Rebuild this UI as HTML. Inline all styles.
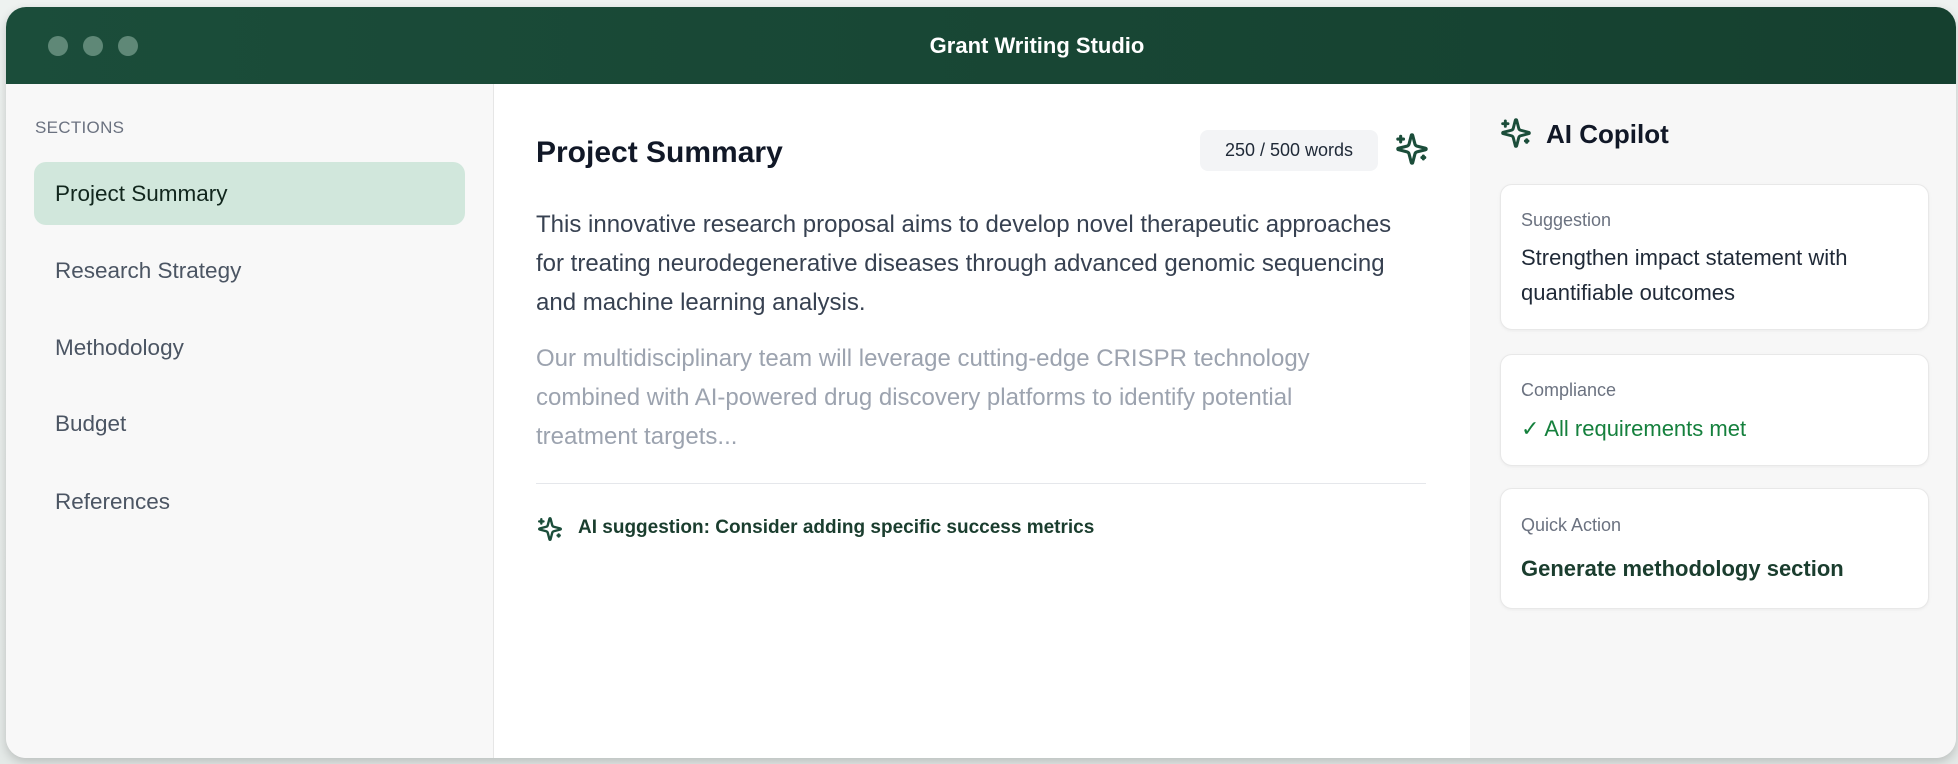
<!DOCTYPE html>
<html><head><meta charset="utf-8"><style>
*{box-sizing:border-box;margin:0;padding:0}
body{width:1958px;height:764px;background:linear-gradient(180deg,#eef2f0,#e4e9e7);font-family:"Liberation Sans",sans-serif;position:relative;overflow:hidden}
.win{position:absolute;left:6px;top:7px;width:1950px;height:751px;border-radius:20px;overflow:hidden;background:#fff;box-shadow:0 4px 10px rgba(0,0,0,.18)}
.hdr{position:absolute;left:0;top:0;width:100%;height:77px;background:linear-gradient(90deg,#1b4d3a,#15402f)}
.dot{position:absolute;top:29px;width:20px;height:20px;border-radius:50%;background:#5f8877}
.title{position:absolute;left:0;width:100%;top:26px;text-align:center;color:#fff;font-weight:bold;font-size:22px;padding-left:112px}
.side{position:absolute;left:0;top:77px;width:488px;bottom:0;background:#f8f8f8;border-right:1px solid #e6e6e6}
.lbl{position:absolute;left:29px;top:34px;font-size:17px;color:#6b7280;letter-spacing:.3px}
.item{position:absolute;left:28px;width:431px;height:63px;line-height:63px;padding-left:21px;font-size:22.5px;color:#4b5563;border-radius:12px}
.item.act{background:#d1e7dc;color:#11261d}
.main{position:absolute;left:489px;top:77px;width:975px;bottom:0}
.h1{position:absolute;left:41px;top:52px;font-size:30px;font-weight:bold;color:#111827}
.badge{position:absolute;left:705px;top:46px;width:178px;height:41px;border-radius:8px;background:#f3f4f6;font-size:18px;color:#1f2937;text-align:center;line-height:41px}
.p{position:absolute;left:41px;width:900px;font-size:24px;line-height:39px;white-space:nowrap}
.div{position:absolute;left:41px;top:399px;width:890px;height:1px;background:#e5e7eb}
.sug{position:absolute;left:83px;top:433px;font-size:19px;font-weight:bold;color:#1a3d2e}
.right{position:absolute;left:1464px;top:77px;right:0;bottom:0;background:#f7f7f7}
.card{position:absolute;left:30px;width:429px;background:#fff;border:1px solid #e8e8e8;border-radius:12px;box-shadow:0 1px 3px rgba(0,0,0,.05)}
.cl{position:absolute;left:20px;font-size:18px;color:#6b7280}
.ct{position:absolute;left:20px;font-size:22px;color:#1f2937;line-height:35px}
svg.sp{position:absolute;fill:none;stroke:#1b4d3a;stroke-width:2.2;stroke-linecap:round;stroke-linejoin:round;transform:scaleX(-1)}
</style></head><body>
<div class="win">
<div class="hdr"><div class="dot" style="left:42px"></div><div class="dot" style="left:77px"></div><div class="dot" style="left:112px"></div><div class="title">Grant Writing Studio</div></div>
<div class="side">
<div class="lbl">SECTIONS</div>
<div class="item act" style="top:78px">Project Summary</div>
<div class="item" style="top:155px">Research Strategy</div>
<div class="item" style="top:232px">Methodology</div>
<div class="item" style="top:308px">Budget</div>
<div class="item" style="top:386px">References</div>
</div>
<div class="main">
<div class="h1">Project Summary</div>
<div class="badge">250 / 500 words</div>
<svg class="sp" style="left:900px;top:48px" width="34" height="34" viewBox="0 0 24 24"><path d="M9.937 15.5A2 2 0 0 0 8.5 14.063l-6.135-1.582a.5.5 0 0 1 0-.962L8.5 9.936A2 2 0 0 0 9.937 8.5l1.582-6.135a.5.5 0 0 1 .963 0L14.063 8.5A2 2 0 0 0 15.5 9.937l6.135 1.581a.5.5 0 0 1 0 .964L15.5 14.063a2 2 0 0 0-1.437 1.437l-1.582 6.135a.5.5 0 0 1-.963 0z"/><path d="M20 3v4M22 5h-4M4 17v2M5 18H3"/></svg>
<div class="p" style="top:121px;color:#374151">This innovative research proposal aims to develop novel therapeutic approaches<br>for treating neurodegenerative diseases through advanced genomic sequencing<br>and machine learning analysis.</div>
<div class="p" style="top:255px;color:#9ca3af">Our multidisciplinary team will leverage cutting-edge CRISPR technology<br>combined with AI-powered drug discovery platforms to identify potential<br>treatment targets...</div>
<div class="div"></div>
<svg class="sp" style="left:42px;top:432px" width="26" height="26" viewBox="0 0 24 24"><path d="M9.937 15.5A2 2 0 0 0 8.5 14.063l-6.135-1.582a.5.5 0 0 1 0-.962L8.5 9.936A2 2 0 0 0 9.937 8.5l1.582-6.135a.5.5 0 0 1 .963 0L14.063 8.5A2 2 0 0 0 15.5 9.937l6.135 1.581a.5.5 0 0 1 0 .964L15.5 14.063a2 2 0 0 0-1.437 1.437l-1.582 6.135a.5.5 0 0 1-.963 0z"/><path d="M20 3v4M22 5h-4M4 17v2M5 18H3"/></svg>
<div class="sug">AI suggestion: Consider adding specific success metrics</div>
</div>
<div class="right">
<svg class="sp" style="left:30px;top:33px" width="32" height="32" viewBox="0 0 24 24"><path d="M9.937 15.5A2 2 0 0 0 8.5 14.063l-6.135-1.582a.5.5 0 0 1 0-.962L8.5 9.936A2 2 0 0 0 9.937 8.5l1.582-6.135a.5.5 0 0 1 .963 0L14.063 8.5A2 2 0 0 0 15.5 9.937l6.135 1.581a.5.5 0 0 1 0 .964L15.5 14.063a2 2 0 0 0-1.437 1.437l-1.582 6.135a.5.5 0 0 1-.963 0z"/><path d="M20 3v4M22 5h-4M4 17v2M5 18H3"/></svg>
<div style="position:absolute;left:76px;top:35px;font-size:26px;font-weight:bold;color:#111827">AI Copilot</div>
<div class="card" style="top:100px;height:146px"><div class="cl" style="top:25px">Suggestion</div><div class="ct" style="top:55px">Strengthen impact statement with quantifiable outcomes</div></div>
<div class="card" style="top:270px;height:112px"><div class="cl" style="top:25px">Compliance</div><div class="ct" style="top:56px;color:#15803d">✓ All requirements met</div></div>
<div class="card" style="top:404px;height:121px"><div class="cl" style="top:26px">Quick Action</div><div class="ct" style="top:62px;font-weight:bold;color:#1a3d2e">Generate methodology section</div></div>
</div>
</div>
</body></html>
